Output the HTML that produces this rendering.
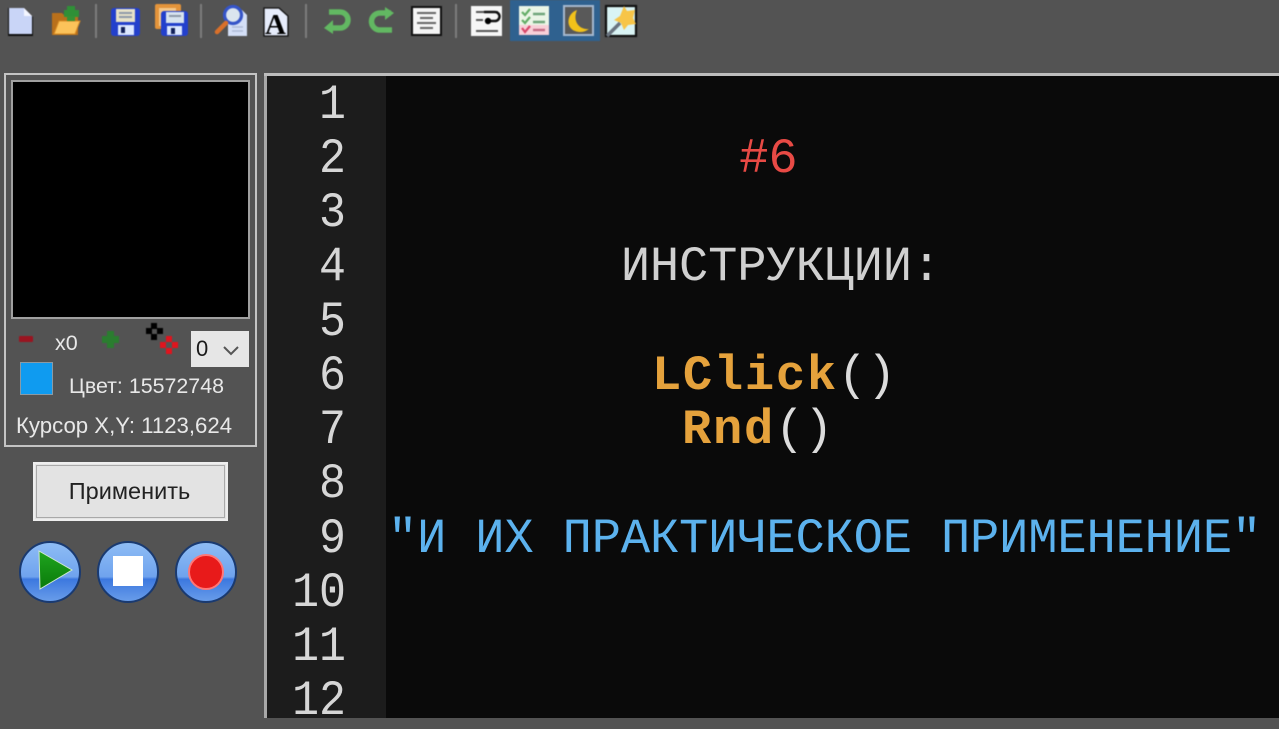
<!DOCTYPE html>
<html><head><meta charset="utf-8"><style>
html,body{margin:0;padding:0;width:1279px;height:718px;overflow:hidden;background:#535353}
div,span{position:absolute;white-space:pre}
.ui{font-family:"Liberation Sans",sans-serif;color:#e8e8e8;font-size:21px}
.m{font-family:"Liberation Mono",monospace;font-size:48.8px;line-height:54.2px;height:54.2px}
.n{color:#d6d6d6;left:266px;width:80px;text-align:right;transform:scaleX(.92);transform-origin:100% 50%}
.t{left:388px;letter-spacing:-.18px}
.t b{letter-spacing:1.7px}
.t span{position:static;color:#dcdcdc;letter-spacing:-.28px}
svg{position:absolute;left:0;top:0}
.soft{filter:blur(.55px)}
</style></head><body>
<div style="left:0;top:0;width:1279px;height:72px;background:#535353"></div>

<!-- toolbar icons -->
<svg class="soft" width="660" height="44" viewBox="0 0 660 44" style="overflow:visible">
<!-- new -->
<path d="M8 8h16l9 9v19H8z" fill="#111"/>
<path d="M9 8h15l8 8v18H9z" fill="#c9d5f7"/><path d="M24 8v8h8z" fill="#f4f6ff"/>
<!-- open -->
<path d="M52 13h10l3 3h13v19H52z" fill="#b9701b"/><path d="M54 34l5-13h21l-5 13z" fill="#fcc35a" stroke="#d98b22"/>
<path d="M67 6h8v4h4v7h-4v4h-8v-4h-3v-7h3z" fill="#2d9436" opacity=".95"/>
<!-- sep -->
<rect x="95" y="4" width="2" height="34" fill="#7d7d7d"/>
<!-- save -->
<rect x="111" y="8" width="29" height="28" rx="3" fill="#2340cc"/>
<rect x="116" y="9" width="19" height="13" fill="#e7e2c8"/><path d="M119 13h13M119 17h13" stroke="#8d98a8" stroke-width="2"/>
<rect x="118" y="25" width="16" height="10" fill="#dce8ff"/><rect x="121" y="27" width="4" height="6" fill="#12205a"/>
<!-- save all -->
<rect x="155" y="4" width="26" height="25" rx="2" fill="#e4943a"/><rect x="159" y="8" width="17" height="18" fill="#f4c88b"/>
<rect x="161" y="11" width="27" height="25" rx="3" fill="#2340cc"/><rect x="166" y="12" width="18" height="11" fill="#d7e3ee"/><path d="M169 16h12" stroke="#8d98a8" stroke-width="2"/>
<rect x="167" y="26" width="15" height="9" fill="#dce8ff"/><rect x="171" y="28" width="4" height="6" fill="#12205a"/>
<rect x="200" y="4" width="2" height="34" fill="#7d7d7d"/>
<!-- find -->
<path d="M228 10h14l5 5v21h-19z" fill="#d4dff7"/><path d="M232 27h11M232 31h11" stroke="#aebbd6" stroke-width="1.5"/>
<circle cx="233" cy="15" r="8.5" fill="#dbe5ee" stroke="#3554c8" stroke-width="3.2"/><path d="M226 23l-9 9" stroke="#d9702a" stroke-width="4.5" stroke-linecap="round"/>
<!-- font -->
<path d="M264 8h15l9 8v20h-24z" fill="#e6ecfb" stroke="#111" stroke-width="1.3"/>
<text x="265" y="34" font-family="Liberation Serif,serif" font-weight="bold" font-size="29" fill="#000" style="letter-spacing:0">A</text>
<rect x="305" y="4" width="2" height="34" fill="#7d7d7d"/>
<!-- undo redo -->
<path d="M329 12h11a8 8 0 0 1 0 16h-9" fill="none" stroke="#62b862" stroke-width="5.5"/><path d="M333 20l-9 8 9 6z" fill="#62b862"/>
<path d="M391 13h-11a8 8 0 0 0 0 17h12" fill="none" stroke="#62b862" stroke-width="5.5"/><path d="M385 7l9 6-9 7z" fill="#62b862"/>
<!-- align -->
<rect x="412" y="7" width="29" height="28" fill="#f4f4f4" stroke="#111" stroke-width="2"/><path d="M417 13h19M420 18h13M417 23h19M420 28h13" stroke="#666" stroke-width="2"/>
<rect x="455" y="4" width="2" height="34" fill="#7d7d7d"/>
<!-- wrap -->
<rect x="471" y="6" width="31" height="30" fill="#f6f6f6"/><path d="M476 12h22M476 31h22M476 20h7" stroke="#555" stroke-width="2"/><path d="M484 12h11a4.5 4.5 0 0 1 0 9h-6" fill="none" stroke="#111" stroke-width="2.5"/><circle cx="488" cy="21" r="3.2" fill="#000"/>
<!-- highlighted -->
<rect x="510" y="0" width="90" height="41" fill="#2f618f"/>
<rect x="519" y="6" width="30" height="29" fill="#eaf5e6"/><rect x="519" y="25" width="30" height="10" fill="#f8cfd8"/>
<path d="M522 12l3 3 5-6M522 20l3 3 5-6" fill="none" stroke="#63ad67" stroke-width="2.2"/><path d="M522 28l3 4 5-6" fill="none" stroke="#d8466a" stroke-width="2.2"/><path d="M533 14h12M533 22h12" stroke="#6fa57a" stroke-width="2.4"/><path d="M533 30h12" stroke="#c46b85" stroke-width="2.4"/>
<rect x="564" y="6" width="29" height="29" fill="#595959" stroke="#a5b8cf" stroke-width="2"/>
<path d="M577 10C566 14 566 28 575 31C580 33 585 32 589 29C580 30 572 22 577 10z" fill="#f2c21a"/>
<!-- wizard -->
<rect x="606" y="6" width="30" height="30" fill="#d9f4f5" stroke="#111" stroke-width="2.2"/>
<path d="M624 6l3 5 8-1-2 8 3 6-8 1-4 5-3-7-7-3 6-4z" fill="#f7c548"/><path d="M607 36l13-13" stroke="#6a7480" stroke-width="3.5"/>
</svg>

<!-- left panel -->
<div style="left:4px;top:73px;width:249px;height:370px;border:2px solid #c4c4c4"></div>
<div style="left:11px;top:80px;width:235px;height:235px;background:#000;border:2px solid #a0a0a0"></div>

<svg class="soft" width="270" height="60" viewBox="0 0 270 60" style="top:318px">
<rect x="19" y="18" width="14" height="6" rx="1" fill="#9a1420"/>
<path d="M107 13h7v5h5v7h-5v5h-7v-5h-5v-7h5z" fill="#2a7d2f"/>
<path d="M151 5h6v6h-6zM146 10h6v6h-6zM157 10h6v6h-6zM151 16h6v6h-6z" fill="#000"/>
<path d="M166 18h6v6h-6zM160 24h6v6h-6zM172 24h6v6h-6zM166 30h6v6h-6z" fill="#e0141e"/>
</svg>
<div class="ui" style="left:55px;top:331px;font-size:21.5px">x0</div>
<div style="left:191px;top:331px;width:58px;height:36px;background:#e6e6e6"></div>
<div class="ui" style="left:196px;top:336px;color:#1a1a1a;font-size:22px">0</div>
<svg width="20" height="12" viewBox="0 0 20 12" style="left:222px;top:345px"><path d="M2 2l7 7 7-7" fill="none" stroke="#555" stroke-width="2"/></svg>
<div style="left:20px;top:362px;width:31px;height:31px;background:#0f9bf0;border:1px solid #8a9aa5"></div>
<div class="ui" style="left:69px;top:374px;font-size:21.4px">Цвет: 15572748</div>
<div class="ui" style="left:16px;top:413px;font-size:22.2px">Курсор X,Y: 1123,624</div>

<div style="left:33px;top:462px;width:191px;height:55px;background:#e3e3e3;border:2px solid #eee;outline:1px solid #a9a9a9;outline-offset:-4px"></div>
<div class="ui" style="left:32px;top:478px;width:195px;text-align:center;color:#222;font-size:23.5px">Применить</div>

<svg width="270" height="80" viewBox="0 0 270 80" style="top:535px">
<defs><linearGradient id="g" x1="0" y1="0" x2="0" y2="1"><stop offset="0" stop-color="#8fbdf5"/><stop offset=".58" stop-color="#6fa3ee"/><stop offset=".62" stop-color="#3c78df"/><stop offset="1" stop-color="#6a9eea"/></linearGradient>
<linearGradient id="p" x1="0" y1="0" x2="0" y2="1"><stop offset="0" stop-color="#1fa51f"/><stop offset="1" stop-color="#0a7a0a"/></linearGradient></defs>
<circle cx="50" cy="37" r="30" fill="url(#g)" stroke="#1a3a70" stroke-width="2"/>
<circle cx="128" cy="37" r="30" fill="url(#g)" stroke="#1a3a70" stroke-width="2"/>
<circle cx="206" cy="37" r="30" fill="url(#g)" stroke="#1a3a70" stroke-width="2"/>
<path d="M39 16l33 19-32 19z" fill="url(#p)" stroke="#cfe8cf" stroke-width="1"/>
<rect x="113" y="21" width="30" height="30" fill="#fff"/>
<circle cx="206" cy="37" r="17" fill="#e81a1a" stroke="#f77" stroke-width="2"/>
</svg>

<!-- editor -->
<div style="left:264px;top:73px;width:1015px;height:3px;background:#bdbdbd"></div>
<div style="left:264px;top:76px;width:3px;height:642px;background:#a8a8a8"></div>
<div style="left:267px;top:76px;width:119px;height:642px;background:#1c1c1c"></div>
<div style="left:386px;top:76px;width:893px;height:642px;background:#0a0a0a"></div>

<div class="m n" style="top:78px">1</div>
<div class="m n" style="top:132px">2</div>
<div class="m n" style="top:186px">3</div>
<div class="m n" style="top:240px">4</div>
<div class="m n" style="top:295px">5</div>
<div class="m n" style="top:349px">6</div>
<div class="m n" style="top:403px">7</div>
<div class="m n" style="top:457px">8</div>
<div class="m n" style="top:512px">9</div>
<div class="m n" style="top:566px">10</div>
<div class="m n" style="top:620px">11</div>
<div class="m n" style="top:674px">12</div>

<div class="m t" style="left:390px;top:132px;color:#e84a45">            #6</div>
<div class="m t" style="top:240px;color:#d0d0d0">        ИНСТРУКЦИИ:</div>
<div class="m t" style="left:390px;top:349px;color:#e5a23c">         <b>LClick</b><span>()</span></div>
<div class="m t" style="left:391px;top:403px;color:#e5a23c">          <b>Rnd</b><span>()</span></div>
<div class="m t" style="top:512px;color:#5cb2ee">"И ИХ ПРАКТИЧЕСКОЕ ПРИМЕНЕНИЕ"</div>
</body></html>
